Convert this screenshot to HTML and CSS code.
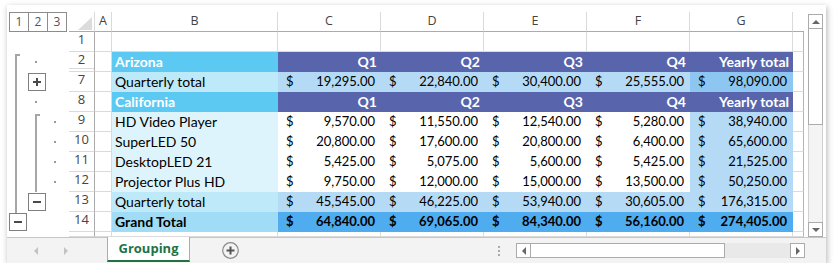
FILE: index.html
```html
<!DOCTYPE html>
<html lang="en">
<head>
    <meta charset="UTF-8">
    <meta name="viewport" content="width=device-width, initial-scale=1.0">
    <title>Grouping</title>
    <link rel="stylesheet" href="styles.css">
</head>
<body>

<div class="window">
    <div class="main">

        <!-- Outline bar -->
        <div class="outline">
            <div class="levels"><span>1</span><span>2</span><span>3</span></div>

            <div class="bracket lv1"></div>
            <div class="bracket lv2"></div>

            <div class="dot c2 g-r2"></div>
            <div class="obtn c2 g-r7">
                <svg width="16" height="16" viewBox="0 0 16 16"><rect x="4" y="7" width="8" height="2" fill="#4a4a4a"/><rect x="7" y="4" width="2" height="8" fill="#4a4a4a"/></svg>
            </div>
            <div class="dot c2 g-r8"></div>
            <div class="dot c3 g-r9"></div>
            <div class="dot c3 g-r10"></div>
            <div class="dot c3 g-r11"></div>
            <div class="dot c3 g-r12"></div>
            <div class="obtn c2 g-r13">
                <svg width="16" height="16" viewBox="0 0 16 16"><rect x="4" y="7" width="8" height="2" fill="#4a4a4a"/></svg>
            </div>
            <div class="obtn c1 g-r14">
                <svg width="16" height="16" viewBox="0 0 16 16"><rect x="4" y="7" width="8" height="2" fill="#4a4a4a"/></svg>
            </div>
        </div>

        <!-- Sheet -->
        <div class="sheet">
            <table class="grid">
                <colgroup>
                    <col class="w-rh"><col class="w-a"><col class="w-b">
                    <col class="w-q"><col class="w-q"><col class="w-q"><col class="w-q"><col class="w-q">
                    <col class="w-h">
                </colgroup>
                <tr class="colhead">
                    <th class="corner"><svg width="14" height="13" viewBox="0 0 14 13"><polygon points="0,13 14,13 14,0" fill="#dcdcdc"/></svg></th>
                    <th>A</th><th>B</th><th>C</th><th>D</th><th>E</th><th>F</th><th>G</th><th class="hc"></th>
                </tr>
                <tr>
                    <td class="rh">1</td><td></td><td></td><td></td><td></td><td></td><td></td><td></td><td class="hc"></td>
                </tr>
                <tr>
                    <td class="rh hidden-after">2</td><td></td>
                    <td class="cyan">Arizona</td>
                    <td class="hd">Q1</td><td class="hd">Q2</td><td class="hd">Q3</td><td class="hd">Q4</td><td class="hd">Yearly total</td>
                    <td class="hc"></td>
                </tr>
                <tr>
                    <td class="rh">7</td><td></td>
                    <td class="lcyan">Quarterly total</td>
                    <td class="lblue"><div class="acc"><span>$</span>19,295.00</div></td>
                    <td class="lblue"><div class="acc"><span>$</span>22,840.00</div></td>
                    <td class="lblue"><div class="acc"><span>$</span>30,400.00</div></td>
                    <td class="lblue"><div class="acc"><span>$</span>25,555.00</div></td>
                    <td class="mblue"><div class="acc"><span>$</span>98,090.00</div></td>
                    <td class="hc"></td>
                </tr>
                <tr>
                    <td class="rh">8</td><td></td>
                    <td class="cyan">California</td>
                    <td class="hd">Q1</td><td class="hd">Q2</td><td class="hd">Q3</td><td class="hd">Q4</td><td class="hd">Yearly total</td>
                    <td class="hc"></td>
                </tr>
                <tr>
                    <td class="rh">9</td><td></td>
                    <td class="pale">HD Video Player</td>
                    <td class="white"><div class="acc"><span>$</span>9,570.00</div></td>
                    <td class="white"><div class="acc"><span>$</span>11,550.00</div></td>
                    <td class="white"><div class="acc"><span>$</span>12,540.00</div></td>
                    <td class="white"><div class="acc"><span>$</span>5,280.00</div></td>
                    <td class="lblue"><div class="acc"><span>$</span>38,940.00</div></td>
                    <td class="hc"></td>
                </tr>
                <tr>
                    <td class="rh">10</td><td></td>
                    <td class="pale">SuperLED 50</td>
                    <td class="white"><div class="acc"><span>$</span>20,800.00</div></td>
                    <td class="white"><div class="acc"><span>$</span>17,600.00</div></td>
                    <td class="white"><div class="acc"><span>$</span>20,800.00</div></td>
                    <td class="white"><div class="acc"><span>$</span>6,400.00</div></td>
                    <td class="lblue"><div class="acc"><span>$</span>65,600.00</div></td>
                    <td class="hc"></td>
                </tr>
                <tr>
                    <td class="rh">11</td><td></td>
                    <td class="pale">DesktopLED 21</td>
                    <td class="white"><div class="acc"><span>$</span>5,425.00</div></td>
                    <td class="white"><div class="acc"><span>$</span>5,075.00</div></td>
                    <td class="white"><div class="acc"><span>$</span>5,600.00</div></td>
                    <td class="white"><div class="acc"><span>$</span>5,425.00</div></td>
                    <td class="lblue"><div class="acc"><span>$</span>21,525.00</div></td>
                    <td class="hc"></td>
                </tr>
                <tr>
                    <td class="rh">12</td><td></td>
                    <td class="pale">Projector Plus HD</td>
                    <td class="white"><div class="acc"><span>$</span>9,750.00</div></td>
                    <td class="white"><div class="acc"><span>$</span>12,000.00</div></td>
                    <td class="white"><div class="acc"><span>$</span>15,000.00</div></td>
                    <td class="white"><div class="acc"><span>$</span>13,500.00</div></td>
                    <td class="lblue"><div class="acc"><span>$</span>50,250.00</div></td>
                    <td class="hc"></td>
                </tr>
                <tr>
                    <td class="rh">13</td><td></td>
                    <td class="lcyan">Quarterly total</td>
                    <td class="lblue"><div class="acc"><span>$</span>45,545.00</div></td>
                    <td class="lblue"><div class="acc"><span>$</span>46,225.00</div></td>
                    <td class="lblue"><div class="acc"><span>$</span>53,940.00</div></td>
                    <td class="lblue"><div class="acc"><span>$</span>30,605.00</div></td>
                    <td class="lblue"><div class="acc"><span>$</span>176,315.00</div></td>
                    <td class="hc"></td>
                </tr>
                <tr class="total">
                    <td class="rh">14</td><td></td>
                    <td class="gcyan">Grand Total</td>
                    <td class="blue"><div class="acc"><span>$</span>64,840.00</div></td>
                    <td class="blue"><div class="acc"><span>$</span>69,065.00</div></td>
                    <td class="blue"><div class="acc"><span>$</span>84,340.00</div></td>
                    <td class="blue"><div class="acc"><span>$</span>56,160.00</div></td>
                    <td class="blue"><div class="acc"><span>$</span>274,405.00</div></td>
                    <td class="hc"></td>
                </tr>
                <tr>
                    <td class="rh"></td><td></td><td></td><td></td><td></td><td></td><td></td><td></td><td class="hc"></td>
                </tr>
            </table>
        </div>

        <!-- Vertical scrollbar -->
        <div class="vscroll">
            <div class="sbtn"><i class="arr up"></i></div>
            <div class="vthumb"></div>
            <div class="vtrack"></div>
            <div class="sbtn"><i class="arr down"></i></div>
        </div>
    </div>

    <!-- Sheet tabs -->
    <div class="tabbar">
        <div class="nav"><i class="arr left dim"></i><i class="arr right dim"></i></div>
        <div class="tab">Grouping</div>
        <svg class="addsheet" width="17" height="17" viewBox="0 0 17 17">
            <circle cx="8.5" cy="8.5" r="7.8" fill="none" stroke="#8a8a8a" stroke-width="1.2"/>
            <rect x="4.5" y="7.5" width="8" height="2" fill="#555"/>
            <rect x="7.5" y="4.5" width="2" height="8" fill="#555"/>
        </svg>
        <div class="spacer"></div>
        <div class="splitter"><b></b><b></b><b></b></div>
        <div class="hscroll">
            <div class="sbtn"><i class="arr left"></i></div>
            <div class="hthumb"></div>
            <div class="htrack"></div>
            <div class="sbtn"><i class="arr right"></i></div>
        </div>
    </div>
</div>

</body>
</html>
```

FILE: styles.css
```css
body {
    margin: 0;
    background: #fff;
}

.window {
    width: 819px;
    height: 258px;
    margin: 5px 0 0 7px;
    background: #fff;
    box-shadow: 1px 2px 6px rgba(0, 0, 0, 0.3);
    display: flex;
    flex-direction: column;
}

.main {
    display: flex;
    height: 232px;
    padding-top: 7px;
    box-sizing: border-box;
}

/* outline bar */
.outline {
    width: 62px;
    flex-shrink: 0;
    padding-left: 2px;
    box-sizing: border-box;
    display: grid;
    grid-template-columns: repeat(3, 19px);
    grid-template-rows: repeat(12, 20px);
}

.levels {
    grid-column: 1 / 4;
    grid-row: 1;
    display: flex;
}

.levels span {
    width: 20px;
    height: 20px;
    margin-right: -1px;
    border: 1px solid #8c8c8c;
    box-sizing: border-box;
    text-align: center;
    font: 12px/18px "Open Sans", sans-serif;
    color: #555;
}

.bracket {
    width: 3px;
    margin-top: 2px;
    border-left: 2px solid #a6a6a6;
    border-top: 2px solid #a6a6a6;
}

.bracket.lv1 {
    grid-column: 1;
    grid-row: 3 / 11;
    margin-left: 6px;
    margin-bottom: -1px;
}

.bracket.lv2 {
    grid-column: 2;
    grid-row: 6 / 10;
    margin-left: 7px;
}

.dot {
    width: 2px;
    height: 2px;
    margin-left: 7px;
    align-self: center;
    background: #9a9a9a;
}

.obtn {
    width: 18px;
    height: 18px;
    margin-top: 1px;
    border: 1px solid #7f7f7f;
    box-sizing: border-box;
    background: #fff;
}

.obtn svg {
    display: block;
}

.c1 { grid-column: 1; }
.c2 { grid-column: 2; }
.c3 { grid-column: 3; }

.g-r2 { grid-row: 3; }
.g-r7 { grid-row: 4; }
.g-r8 { grid-row: 5; }
.g-r9 { grid-row: 6; }
.g-r10 { grid-row: 7; }
.g-r11 { grid-row: 8; }
.g-r12 { grid-row: 9; }
.g-r13 { grid-row: 10; }
.g-r14 { grid-row: 11; }

/* sheet grid */
.sheet {
    width: 735px;
    height: 225px;
    flex-shrink: 0;
    overflow: hidden;
}

.grid {
    width: 735px;
    table-layout: fixed;
    border-collapse: separate;
    border-spacing: 0;
    font-family: "Lato", sans-serif;
    font-size: 14px;
    color: #000;
}

.w-rh { width: 26px; }
.w-a { width: 17px; }
.w-b { width: 166px; }
.w-q { width: 103px; }
.w-h { width: 11px; }

.grid td,
.grid th {
    padding: 0 3px;
    line-height: 19px;
    border-right: 1px solid #dadada;
    border-bottom: 1px solid #dadada;
    white-space: nowrap;
    overflow: hidden;
}

.colhead th {
    font: 12.5px/17px "Open Sans", sans-serif;
    padding-bottom: 2px;
    color: #444;
    text-align: center;
    border-bottom-color: #ababab;
    overflow: visible;
}

.colhead th.corner {
    padding: 0;
}

.corner svg {
    display: block;
    margin: 5px 2px 1px auto;
}

.grid .rh {
    font: 13px/15px "Open Sans", sans-serif;
    padding-bottom: 4px;
    color: #444;
    text-align: center;
    border-right-color: #ababab;
    overflow: visible;
}

.grid .hidden-after {
    box-shadow: inset 0 -2px 0 #fff, inset 0 -3px 0 #dadada;
}

.grid .hc {
    padding: 0;
}

.grid td.hc {
    border-right-color: #b4b4b4;
}

.grid th.hc {
    border-right: none;
}

.acc {
    display: flex;
    justify-content: space-between;
    padding: 0 2px 0 5px;
    font-size: 13px;
}

.total td {
    font-weight: bold;
}

.grid .cyan,
.grid .hd,
.grid .lcyan,
.grid .pale,
.grid .white,
.grid .lblue,
.grid .mblue,
.grid .gcyan,
.grid .blue {
    border-color: transparent;
}

.cyan {
    background: #5cc9f2;
    color: #fff;
    font-weight: bold;
}

.hd {
    background: #5865ad;
    color: #fff;
    font-weight: bold;
    text-align: right;
}

.lcyan { background: #bde9f8; }
.pale { background: #def4fc; }
.white { background: #fff; }
.lblue { background: #b5daf6; }
.mblue { background: #8cc6f1; }
.gcyan { background: #a0dcf5; }
.blue { background: #4eacef; }

/* scrollbars */
.vscroll {
    width: 15px;
    margin: 2px 0 0 4px;
    display: flex;
    flex-direction: column;
}

.sbtn {
    width: 15px;
    height: 15px;
    border: 1px solid #ababab;
    box-sizing: border-box;
    background: #fff;
    display: flex;
    align-items: center;
    justify-content: center;
}

.vthumb {
    height: 96px;
    border: 1px solid #ababab;
    border-top: none;
    box-sizing: border-box;
    background: #fff;
}

.vtrack {
    flex: 1;
    border-left: 1px solid #d0d0d0;
    border-right: 1px solid #d0d0d0;
    background: #f4f4f4;
}

.arr {
    width: 0;
    height: 0;
    border: 4px solid transparent;
}

.arr.up {
    border-top: none;
    border-bottom-color: #666;
}

.arr.down {
    border-bottom: none;
    border-top-color: #666;
}

.arr.left {
    border-left: none;
    border-right-color: #666;
}

.arr.right {
    border-right: none;
    border-left-color: #666;
}

.arr.dim.left { border-right-color: #c3c3c3; }
.arr.dim.right { border-left-color: #c3c3c3; }

/* tab bar */
.tabbar {
    height: 26px;
    border-top: 1px solid #c6c6c6;
    box-sizing: border-box;
    background: #f3f3f3;
    display: flex;
    align-items: center;
}

.nav {
    width: 100px;
    display: flex;
    align-items: center;
    padding-left: 27px;
    box-sizing: border-box;
}

.nav .arr + .arr {
    margin-left: 26px;
}

.tab {
    width: 83px;
    height: 25px;
    align-self: flex-start;
    margin-top: -1px;
    border-left: 1px solid #ababab;
    border-right: 1px solid #ababab;
    border-bottom: 2px solid #217346;
    box-sizing: border-box;
    background: #fff;
    text-align: center;
    font: bold 13px/22px "Open Sans", sans-serif;
    color: #217346;
}

.addsheet {
    margin-left: 32px;
    display: block;
}

.spacer {
    flex: 1;
}

.splitter {
    width: 2px;
    margin-right: 16px;
    display: flex;
    flex-direction: column;
    gap: 2px;
}

.splitter b {
    height: 2px;
    background: #aaa;
}

.hscroll {
    width: 289px;
    height: 15px;
    margin-right: 21px;
    display: flex;
}

.hthumb {
    width: 195px;
    margin-left: -1px;
    border: 1px solid #ababab;
    box-sizing: border-box;
    background: #fff;
}

.htrack {
    flex: 1;
    background: #e9e9e9;
}
```
